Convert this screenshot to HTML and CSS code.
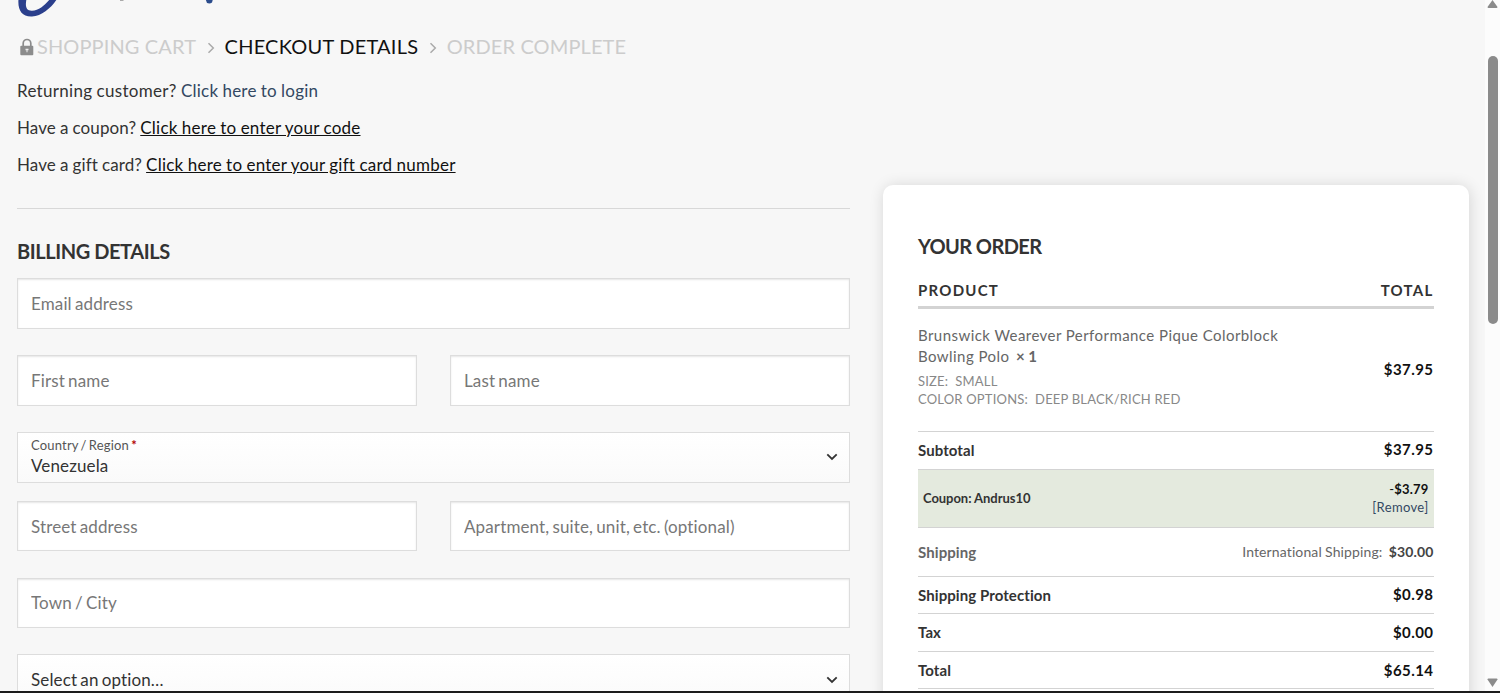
FILE: index.html
```
<!DOCTYPE html>
<html lang="en">
<head>
    <meta charset="UTF-8">
    <meta name="viewport" content="width=device-width, initial-scale=1.0">
    <title>Checkout</title>
    <link rel="stylesheet" href="styles.css">
</head>
<body>
    <div class="window">
        <div class="page">
            <header>
                <svg class="logo" width="240" height="20" viewBox="0 0 240 20">
                    <path d="M18.500 -1C17.500 10 22 17 32 16.500C42 16 51 8 57 -1H50C45 5 39 10.500 32 10.800C26 11 25 6 26.500 -1z" fill="#2b3f8c"/>
                    <path d="M120 0h3.500v1h-3.500z" fill="#aaa"/>
                    <path d="M205.500 -1h7.500l-1 3.500q-2 1.500-5 .5z" fill="#2b4c8c"/>
                </svg>
            </header>

            <nav class="breadcrumbs">
                <svg class="lock" width="14" height="18" viewBox="0 0 14 18">
                    <path d="M3.200 9V5.300a3.800 3.800 0 0 1 7.600 0V9" fill="none" stroke="#8c8c8c" stroke-width="1.700"/>
                    <rect x="0.300" y="7.800" width="13" height="9.400" rx="1" fill="#8c8c8c"/>
                    <path d="M5.500 10.800h3v1.500h-1v2h-1v-2h-1z" fill="#eee"/>
                </svg>
                <a href="#" class="step">SHOPPING CART</a>
                <svg class="divider" width="8" height="12" viewBox="0 0 8 12"><path d="M1.500 1.200L6.300 6L1.500 10.800" fill="none" stroke="#aaa" stroke-width="1.500"/></svg>
                <a href="#" class="step current">CHECKOUT DETAILS</a>
                <svg class="divider" width="8" height="12" viewBox="0 0 8 12"><path d="M1.500 1.200L6.300 6L1.500 10.800" fill="none" stroke="#aaa" stroke-width="1.500"/></svg>
                <a href="#" class="step">ORDER COMPLETE</a>
            </nav>

            <div class="notices">
                <p class="returning">Returning customer? <a href="#" class="login">Click here to login</a></p>
                <p>Have a coupon? <a href="#">Click here to enter your code</a></p>
                <p>Have a gift card? <a href="#">Click here to enter your gift card number</a></p>
            </div>

            <div class="checkout">
                <form class="billing">
                    <h3>BILLING DETAILS</h3>
                    <div class="form-row">
                        <input type="text" placeholder="Email address">
                    </div>
                    <div class="form-row">
                        <input type="text" placeholder="First name">
                        <input type="text" placeholder="Last name">
                    </div>
                    <div class="form-row row-country">
                        <div class="select">
                            <div>
                                <label>Country / Region <span class="required">*</span></label>
                                <span class="value">Venezuela</span>
                            </div>
                            <svg width="12" height="8" viewBox="0 0 12 8"><path d="M1.300 1.300L6 6L10.700 1.300" fill="none" stroke="#333" stroke-width="1.800"/></svg>
                        </div>
                    </div>
                    <div class="form-row">
                        <input type="text" placeholder="Street address">
                        <input type="text" placeholder="Apartment, suite, unit, etc. (optional)">
                    </div>
                    <div class="form-row">
                        <input type="text" placeholder="Town / City">
                    </div>
                    <div class="form-row">
                        <div class="select">
                            <span class="value">Select an option…</span>
                            <svg width="12" height="8" viewBox="0 0 12 8"><path d="M1.300 1.300L6 6L10.700 1.300" fill="none" stroke="#333" stroke-width="1.800"/></svg>
                        </div>
                    </div>
                </form>

                <div class="order">
                    <h3>YOUR ORDER</h3>
                    <div class="line head"><span>PRODUCT</span><span>TOTAL</span></div>
                    <div class="line product">
                        <div>
                            <div class="name">Brunswick Wearever Performance Pique Colorblock<br>Bowling Polo&nbsp; <b>× 1</b></div>
                            <div class="meta">SIZE:&nbsp; SMALL</div>
                            <div class="meta">COLOR OPTIONS:&nbsp; DEEP BLACK/RICH RED</div>
                        </div>
                        <span class="amount raised">$37.95</span>
                    </div>
                    <div class="line"><span>Subtotal</span><span class="amount raised">$37.95</span></div>
                    <div class="line coupon">
                        <span class="code">Coupon: Andrus10</span>
                        <div class="discount"><span>-<b>$3.79</b></span><a href="#">[Remove]</a></div>
                    </div>
                    <div class="line shipping">
                        <span>Shipping</span>
                        <span class="method">International Shipping:&nbsp; <b>$30.00</b></span>
                    </div>
                    <div class="line"><span>Shipping Protection</span><span class="amount raised">$0.98</span></div>
                    <div class="line"><span>Tax</span><span class="amount">$0.00</span></div>
                    <div class="line"><span>Total</span><span class="amount">$65.14</span></div>
                </div>
            </div>
        </div>
        <div class="scrollbar">
            <svg width="11" height="9" viewBox="0 0 11 9"><path d="M5.500 0L10.500 7Q10.500 8 9.500 8H1.500Q0.500 8 0.500 7z" fill="#8b8b8b"/></svg>
            <div class="thumb"></div>
            <svg width="11" height="9" viewBox="0 0 11 9"><path d="M5.500 9L10.500 1.500Q10.500 0.500 9.500 0.500H1.500Q0.500 0.500 0.500 1.500z" fill="#8b8b8b"/></svg>
        </div>
    </div>
</body>
</html>
```
FILE: styles.css
```
* {
    box-sizing: border-box;
}
body {
    margin: 0;
    height: 693px;
    overflow: hidden;
    background: #f7f7f7;
    border-bottom: 2px solid #1c1c1c;
    font-family: Lato, sans-serif;
    font-size: 17px;
    font-variant-ligatures: none;
    color: #333;
}
a {
    color: inherit;
    text-decoration: none;
}
h3, p {
    margin: 0;
}
.window {
    display: flex;
    height: 691px;
}
.page {
    width: 1485px;
    height: 691px;
    overflow: hidden;
}
header {
    height: 20px;
}
.logo {
    display: block;
}
.breadcrumbs {
    display: flex;
    align-items: center;
    height: 53px;
    padding-left: 20px;
    font-size: 20px;
    line-height: 53px;
    letter-spacing: 0.12px;
    color: #ccc;
}
.breadcrumbs .step {
    white-space: nowrap;
}
.breadcrumbs .lock {
    margin-right: 3px;
}
.breadcrumbs .divider {
    margin: 3px 10px 0 10.500px;
}
.breadcrumbs .current {
    letter-spacing: 0.22px;
    color: #111;
}
.notices {
    height: 112px;
    padding-left: 17px;
    letter-spacing: 0.1px;
    word-spacing: -0.4px;
}
.notices p {
    height: 36.800px;
    line-height: 36.800px;
}
.notices .returning {
    letter-spacing: 0.3px;
}
.notices a {
    color: #111;
    letter-spacing: 0.24px;
    text-decoration: underline;
}
.notices a.login {
    color: #334862;
    letter-spacing: 0.22px;
    text-decoration: none;
}
.checkout {
    display: grid;
    grid-template-columns: 833px 586px;
    column-gap: 33px;
    padding-left: 17px;
}
.billing {
    margin-top: 23px;
    border-top: 1px solid #d8d8d8;
}
.billing h3 {
    height: 69.300px;
    padding-top: 27px;
    font-size: 20px;
    line-height: 30px;
    letter-spacing: -0.42px;
}
.form-row {
    display: flex;
    gap: 33px;
    margin-bottom: 26.200px;
}
.row-country {
    margin-bottom: 18px;
}
.form-row input,
.select {
    flex: 1;
    min-width: 0;
    height: 50.700px;
    padding: 0 13px;
    border: 1px solid #ddd;
    background: #fff;
    font-family: inherit;
    font-size: 17px;
    letter-spacing: 0.13px;
    word-spacing: -1.300px;
    color: #333;
}
.form-row input {
    box-shadow: inset 0 1px 2px rgba(0, 0, 0, 0.1);
}
.form-row input::placeholder {
    color: #777;
}
.select {
    display: flex;
    align-items: center;
    justify-content: space-between;
    padding-right: 11px;
    background: linear-gradient(#fff, #fafafa);
}
.select label {
    display: block;
    font-size: 13px;
    line-height: 16px;
    letter-spacing: 0.18px;
    color: #555;
}
.select .value {
    display: block;
    line-height: 24px;
}
.select label + .value {
    padding-top: 1px;
    line-height: 23px;
}
.required {
    color: #b20000;
    font-weight: bold;
}
.order {
    height: 560px;
    padding: 46px 35.500px 0 35px;
    border-radius: 10px;
    background: #fff;
    box-shadow: 1px 1px 15px rgba(0, 0, 0, 0.14);
}
.order h3 {
    height: 43px;
    font-size: 20px;
    line-height: 31px;
    letter-spacing: -0.6px;
}
.line {
    display: flex;
    justify-content: space-between;
    align-items: center;
    height: 37.500px;
    border-bottom: 1px solid #d3d3d3;
    font-size: 15px;
    font-weight: bold;
    letter-spacing: 0.08px;
}
.line.head {
    height: 35px;
    padding-bottom: 1px;
    border-bottom: 3px solid #d3d3d3;
    letter-spacing: 1.25px;
}
.line.product {
    height: 123px;
    font-weight: normal;
}
.name {
    margin-top: -8px;
    font-size: 15px;
    line-height: 21px;
    letter-spacing: 0.44px;
    color: #666;
}
.name b {
    margin-left: -2px;
    letter-spacing: 0;
}
.meta {
    font-size: 13px;
    line-height: 18px;
    letter-spacing: 0.2px;
    color: #888;
}
.name + .meta {
    margin-top: 5px;
}
.amount {
    color: #111;
    font-weight: bold;
    letter-spacing: 0.45px;
}
.raised {
    padding-bottom: 2px;
}
.line.coupon {
    height: 58px;
    padding: 0 5px;
    background: #e4eade;
    font-size: 13px;
}
.coupon .code {
    letter-spacing: -0.05px;
}
.discount {
    display: flex;
    flex-direction: column;
    align-items: flex-end;
    font-weight: normal;
    line-height: 18px;
    letter-spacing: 0.2px;
}
.discount span {
    color: #111;
}
.discount a {
    color: #334862;
    letter-spacing: 0.35px;
}
.line.shipping {
    height: 49px;
    color: #666;
}
.method {
    font-size: 14px;
    font-weight: normal;
    letter-spacing: 0.12px;
    word-spacing: -0.5px;
}
.method b {
    color: #444;
}
.scrollbar {
    display: flex;
    flex-direction: column;
    align-items: center;
    justify-content: space-between;
    width: 15px;
    padding-bottom: 4px;
    background: #fcfcfc;
}
.thumb {
    width: 10px;
    height: 268px;
    margin: 47px 0 auto;
    border-radius: 5px;
    background: #8b8b8b;
}
```
